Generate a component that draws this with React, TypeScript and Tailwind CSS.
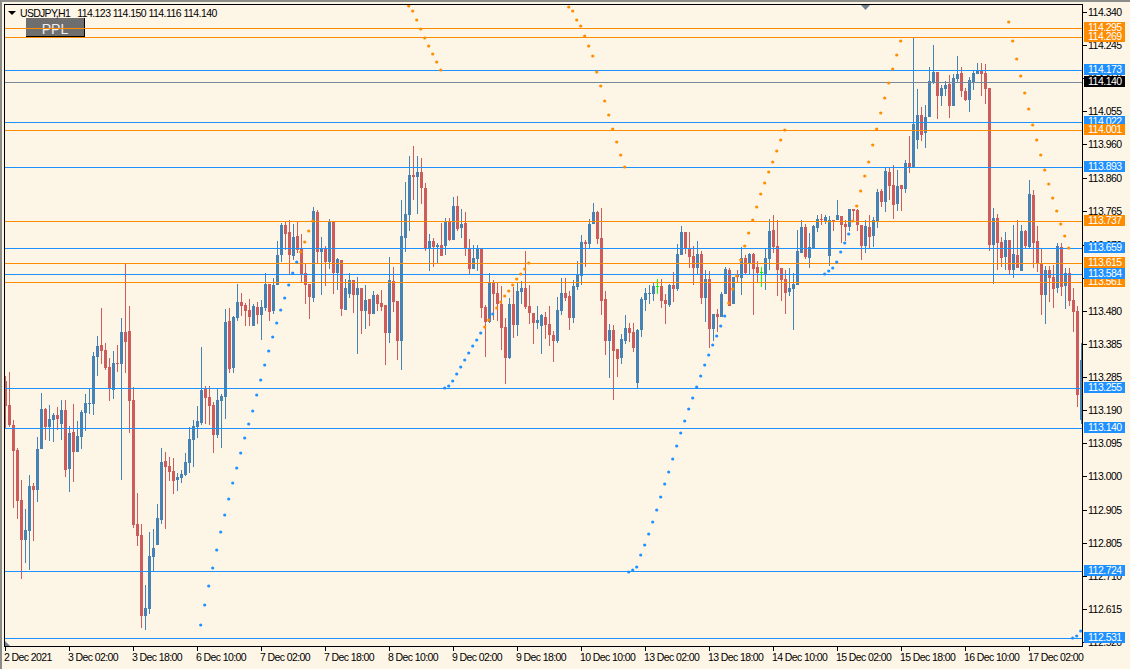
const BLUE = "#4682b4";
const RED = "#cd5c5c";
const GREEN = "#00ff00";
const LINE_BLUE = "#1e90ff";
const LINE_ORANGE = "#ff8c00";

// [high, bodyTop, bodyBottom, low, colour] in page pixels. colour: 0 blue, 1 red, 2 green
const CANDLES: number[][] = [
  [376,381,406,428,1],[372,405,425,427,1],[420,425,451,508,1],[448,450,501,519,1],[480,500,540,579,1],
  [509,530,540,563,0],[475,486,531,570,0],[483,486,490,541,1],[437,449,490,502,0],[393,409,449,449,0],
  [408,409,427,440,1],[405,419,427,441,0],[413,415,420,442,0],[407,415,419,430,1],[400,410,424,440,0],
  [400,410,470,477,1],[426,433,469,492,0],[404,432,452,482,1],[421,436,452,452,0],[410,412,437,449,0],
  [394,403,413,431,0],[389,403,404,414,0],[352,356,404,415,0],[336,346,357,376,0],[308,345,351,364,1],
  [343,350,368,370,1],[358,367,388,401,1],[351,363,390,399,0],[345,363,364,372,1],[318,332,364,480,0],
  [263,332,342,373,1],[306,331,401,433,1],[387,400,525,528,1],[493,524,536,546,1],[524,535,616,628,1],
  [585,608,616,630,0],[532,556,609,614,0],[529,548,557,572,0],[504,518,545,545,0],[448,462,520,524,0],
  [452,461,467,529,1],[457,466,472,481,1],[458,471,481,494,1],[473,477,480,491,0],[470,474,478,483,0],
  [453,462,475,476,0],[427,439,463,473,0],[420,426,440,467,0],[406,421,427,438,0],[347,390,423,425,0],
  [386,389,398,424,1],[386,397,406,425,1],[402,405,435,453,1],[389,400,435,438,0],[394,396,401,448,0],
  [309,322,397,419,0],[308,321,369,373,1],[316,317,368,373,0],[284,302,318,321,0],[293,302,306,316,1],
  [303,305,311,326,1],[299,310,317,326,1],[304,306,326,326,0],[302,307,315,324,1],[300,307,315,340,0],
  [273,284,308,311,0],[284,284,312,321,1],[278,285,311,314,0],[241,255,285,285,0],[223,225,255,262,0],
  [222,225,234,250,1],[220,232,255,275,1],[224,237,256,260,0],[222,236,250,253,1],[234,249,274,282,1],
  [264,273,285,304,1],[284,284,297,319,1],[207,211,298,302,0],[210,212,252,263,1],[237,249,252,295,0],
  [246,249,262,286,1],[219,222,262,269,0],[222,222,273,294,1],[258,259,273,290,0],[260,260,309,316,1],
  [279,288,310,310,0],[273,280,294,298,0],[280,280,295,313,1],[277,288,295,354,0],[288,288,311,334,1],
  [285,300,311,329,0],[299,299,314,326,1],[291,295,314,314,0],[294,295,304,311,1],[290,303,307,311,1],
  [305,305,333,365,1],[257,280,333,343,0],[267,281,302,312,1],[301,301,341,360,1],[200,236,341,370,0],
  [182,214,238,252,0],[156,175,215,231,0],[146,175,177,200,1],[156,172,177,214,0],[158,172,188,204,1],
  [183,188,248,251,1],[234,241,248,271,0],[238,241,247,267,1],[243,245,247,263,0],[223,245,256,256,1],
  [218,221,246,255,0],[218,221,240,241,1],[197,206,240,240,0],[196,206,229,231,1],[209,224,228,238,0],
  [212,223,248,256,1],[239,249,269,274,1],[245,258,269,269,0],[245,249,259,271,0],[248,249,308,318,1],
  [305,307,322,357,1],[273,283,322,323,0],[280,283,294,320,1],[283,293,304,321,1],[286,304,328,350,1],
  [318,327,358,384,1],[298,304,358,359,0],[287,304,325,338,1],[282,291,325,336,0],[281,288,292,304,0],
  [251,288,307,309,1],[285,306,313,324,1],[313,313,323,344,1],[306,320,323,329,0],[314,315,326,354,0],
  [312,317,325,339,1],[306,324,335,346,1],[331,335,341,362,1],[297,310,341,343,0],[278,293,311,315,0],
  [278,293,298,301,1],[291,296,318,330,1],[280,286,318,323,0],[261,274,287,290,0],[235,242,276,285,0],
  [240,242,244,267,1],[219,224,244,249,0],[203,212,224,224,0],[211,212,239,244,1],[208,238,301,315,1],
  [291,299,341,355,1],[324,330,341,378,0],[325,330,351,400,1],[349,349,359,377,1],[334,339,358,364,0],
  [315,328,341,344,0],[323,328,333,342,1],[323,332,348,352,1],[329,330,383,389,0],[297,299,330,337,0],
  [288,293,300,311,0],[285,293,294,304,0],[283,286,294,301,0],[279,286,287,294,2],[279,286,301,308,1],
  [294,300,304,324,1],[284,285,305,307,0],[272,285,289,302,1],[244,254,289,291,0],[226,232,255,255,0],
  [232,232,249,254,1],[232,249,257,268,1],[246,256,268,285,1],[241,254,268,274,0],[251,254,298,304,1],
  [270,279,298,322,0],[271,279,329,348,1],[314,314,329,341,0],[309,314,317,332,1],[292,294,317,317,0],
  [267,269,294,294,0],[268,270,306,306,1],[277,277,304,304,0],[270,275,277,282,1],[247,258,278,295,0],
  [255,258,273,275,1],[253,254,264,275,0],[253,254,269,315,1],[261,267,273,283,1],[267,272,273,287,2],
  [249,258,275,290,0],[219,231,259,270,0],[215,230,247,253,1],[220,246,270,296,1],[268,268,280,301,1],
  [270,279,293,314,1],[268,288,292,296,0],[273,284,289,330,0],[230,251,285,285,0],[220,227,253,253,0],
  [224,227,257,259,1],[233,247,258,268,0],[225,226,248,248,0],[215,219,228,232,0],[214,219,220,225,1],
  [215,217,221,224,0],[216,220,256,266,0],[220,220,221,231,1],[200,215,220,220,0],[216,216,225,243,1],
  [220,224,227,241,1],[209,209,227,231,0],[209,209,211,222,1],[209,210,225,231,1],[225,225,246,260,1],
  [220,226,246,253,0],[215,227,237,249,1],[217,220,236,247,0],[189,192,221,228,0],[189,191,202,207,1],
  [168,171,202,212,0],[167,172,186,200,1],[165,185,205,219,1],[170,186,204,211,0],[185,185,189,211,1],
  [160,163,189,193,0],[136,163,167,173,1],[38,124,167,167,0],[89,115,140,149,0],[107,115,135,141,1],
  [105,117,133,148,0],[67,81,117,117,0],[45,72,82,84,0],[72,72,96,119,1],[85,88,96,106,0],
  [81,85,89,96,0],[75,84,106,118,1],[74,78,106,106,0],[56,74,79,82,0],[67,73,91,97,1],
  [88,91,100,101,1],[77,80,100,112,0],[70,73,82,90,0],[63,71,74,74,0],[63,71,74,96,1],
  [64,73,89,104,1],[88,88,245,251,1],[208,218,245,284,0],[214,218,243,270,1],[237,242,258,267,1],
  [232,240,257,270,0],[240,240,270,274,1],[225,254,270,278,0],[220,255,268,268,1],[225,231,271,271,0],
  [230,231,246,249,1],[180,194,247,248,0],[190,195,243,268,1],[226,241,264,272,1],[249,264,295,315,1],
  [266,270,295,324,0],[266,270,278,302,1],[265,277,289,308,1],[243,246,288,293,0],[243,247,287,296,1],
  [268,273,286,309,0],[268,273,301,306,1],[288,300,312,332,1],[306,311,395,407,1],[343,360,420,424,0],
];

// [first index, colour, y values] for the stop-and-reverse dots
const DOTS: [number, string, number[]][] = [
  [49, LINE_BLUE, [625,605,586,568,550,532,515,499,483,468,453,438,424,411,395,380,365,351,337,323,310,298,285,273,262]],
  [74, LINE_ORANGE, [252,242,231,221]],
  [101, LINE_ORANGE, [6,11,20,29,38,46,54,62,70]],
  [110, LINE_BLUE, [388,386,381,374,367,360,353,346,340,333]],
  [120, LINE_ORANGE, [327,320]],
  [122, LINE_BLUE, [314]],
  [123, LINE_ORANGE, [308,302,296,291,285,279,274,269,263]],
  [141, LINE_ORANGE, [7,11,20,26,36,46,56,72,86,101,115,129,142,155,167]],
  [156, LINE_BLUE, [572,570,567,555,545,534,522,510,497,484,472,459,446,433,421,409]],
  [172, LINE_BLUE, [398,387,376,365,355,345,336,326,316]],
  [181, LINE_ORANGE, [303,289,276,260,246,233,220,207,194,183,172,162,151,140,130]],
  [205, LINE_BLUE, [274,271,268,262,252,243,234]],
  [212, LINE_ORANGE, [221,206,191,176,162,145,129,113,98,83,69,55,41]],
  [251, LINE_ORANGE, [22,41,59,76,93,109,125,140,155,170,184,198,211,224,236,248]],
  [267, LINE_BLUE, [638,636,631]],
];

const LEVELS: [number, string][] = [
  [28, LINE_ORANGE],[37, LINE_ORANGE],[70, LINE_BLUE],[82, "#778899"],[122, LINE_BLUE],[130, LINE_ORANGE],
  [167, LINE_BLUE],[221, LINE_ORANGE],[248, LINE_BLUE],[263, LINE_ORANGE],[274, LINE_BLUE],[282, LINE_ORANGE],
  [388, LINE_BLUE],[428, LINE_BLUE],[571, LINE_BLUE],[638, LINE_BLUE],
];

const PRICE_TICKS: [number, string][] = [
  [12,"114.340"],[45,"114.245"],[78,"114.150"],[111,"114.055"],[144,"113.960"],[178,"113.860"],[211,"113.765"],
  [245,"113.670"],[278,"113.575"],[311,"113.480"],[344,"113.385"],[377,"113.285"],[410,"113.190"],[443,"113.095"],
  [476,"113.000"],[510,"112.905"],[543,"112.805"],[576,"112.710"],[609,"112.615"],[642,"112.520"],
];

// paint order matters, later tags cover earlier ones
const PRICE_TAGS: [number, string, string][] = [
  [28,"114.295",LINE_ORANGE],[37,"114.269",LINE_ORANGE],[70,"114.173",LINE_BLUE],[82,"114.140","#000000"],
  [122,"114.022",LINE_BLUE],[130,"114.001",LINE_ORANGE],[167,"113.893",LINE_BLUE],[221,"113.737",LINE_ORANGE],
  [248,"113.659",LINE_BLUE],[263,"113.615",LINE_ORANGE],[282,"113.561",LINE_ORANGE],[274,"113.584",LINE_BLUE],
  [388,"113.255",LINE_BLUE],[428,"113.140",LINE_BLUE],[571,"112.724",LINE_BLUE],[638,"112.531",LINE_BLUE],
];

const TIME_LABELS = [
  "2 Dec 2021","3 Dec 02:00","3 Dec 18:00","6 Dec 10:00","7 Dec 02:00","7 Dec 18:00","8 Dec 10:00","9 Dec 02:00",
  "9 Dec 18:00","10 Dec 10:00","13 Dec 02:00","13 Dec 18:00","14 Dec 10:00","15 Dec 02:00","15 Dec 18:00",
  "16 Dec 10:00","17 Dec 02:00",
];

function Chart() {
  return (
    <svg className="absolute left-0 top-0" width={1077} height={641} viewBox="5 5 1077 641">
      <g shapeRendering="crispEdges">
        {CANDLES.map(([h, t, b, l, c], i) => {
          const fill = c === 0 ? BLUE : c === 1 ? RED : GREEN;
          const x = 5 + 4 * i;
          return (
            <g key={i} fill={fill}>
              <rect x={x} y={h} width={1} height={Math.max(1, l - h)} />
              <rect x={x - 1} y={t} width={3} height={Math.max(1, b - t)} />
            </g>
          );
        })}
        {LEVELS.map(([y, color]) => (
          <rect key={y} x={5} y={y} width={1077} height={1} fill={color} />
        ))}
      </g>
      {DOTS.map(([start, color, ys]) =>
        ys.map((y, k) => <circle key={start + k} cx={4.7 + 4 * (start + k)} cy={y} r={1.6} fill={color} />)
      )}
      <polygon points="861,5 870,5 865.5,10" fill="#708090" />
      <polygon points="5,641 10,646 5,646" fill="#708090" />
    </svg>
  );
}

export default function App() {
  return (
    <div className="flex h-[669px] w-[1130px] flex-col overflow-hidden border-l-2 border-t-2 border-[#8c8c88] bg-[#fdf5e6] pl-0.5 pt-0.5 font-['Liberation_Sans',sans-serif] text-[10.5px] leading-none tracking-[-0.5px] text-black">
      <div className="flex h-[643px] shrink-0">
        <div className="relative h-full w-[1079px] shrink-0 border border-black">
          {/* chart button sits under the level lines */}
          <div className="absolute left-[21px] top-[13px] flex h-[19px] w-[59px] items-start justify-center border-b border-r border-black bg-[#6e6e6e] pt-[4px] text-[14px] tracking-normal text-[#f0f0f0]">
            PPL
          </div>
          <Chart />
          <div className="absolute left-[3px] top-[6px] h-0 w-0 border-x-[4px] border-t-[4px] border-x-transparent border-t-black" />
          <div className="absolute left-[15px] top-[2px] flex h-[12px] items-center gap-[7px] whitespace-pre">
            <span className="tracking-[-0.7px]">USDJPY,H1</span>
            <span className="tracking-[-0.55px]">114.123 114.150 114.116 114.140</span>
          </div>
        </div>
        <div className="relative h-full flex-1">
          {PRICE_TICKS.map(([y, label]) => (
            <div key={label} className="absolute left-0 flex h-[11px] items-center" style={{ top: y - 9 }}>
              <div className="h-px w-[4px] bg-black" />
              <span className="ml-[1px]">{label}</span>
            </div>
          ))}
          {PRICE_TAGS.map(([y, label, color]) => (
            <div
              key={label}
              className="absolute left-[1px] flex h-[11px] w-[41px] items-center pl-[4px] text-white"
              style={{ top: y - 10, backgroundColor: color }}
            >
              {label}
            </div>
          ))}
        </div>
      </div>
      <div className="grid grid-cols-[repeat(17,64px)] tracking-[-0.6px]">
        {TIME_LABELS.map((label) => (
          <div key={label} className="whitespace-nowrap">
            <div className="ml-px h-[4px] w-px bg-black" />
            <div className="mt-[1px]">{label}</div>
          </div>
        ))}
      </div>
    </div>
  );
}
